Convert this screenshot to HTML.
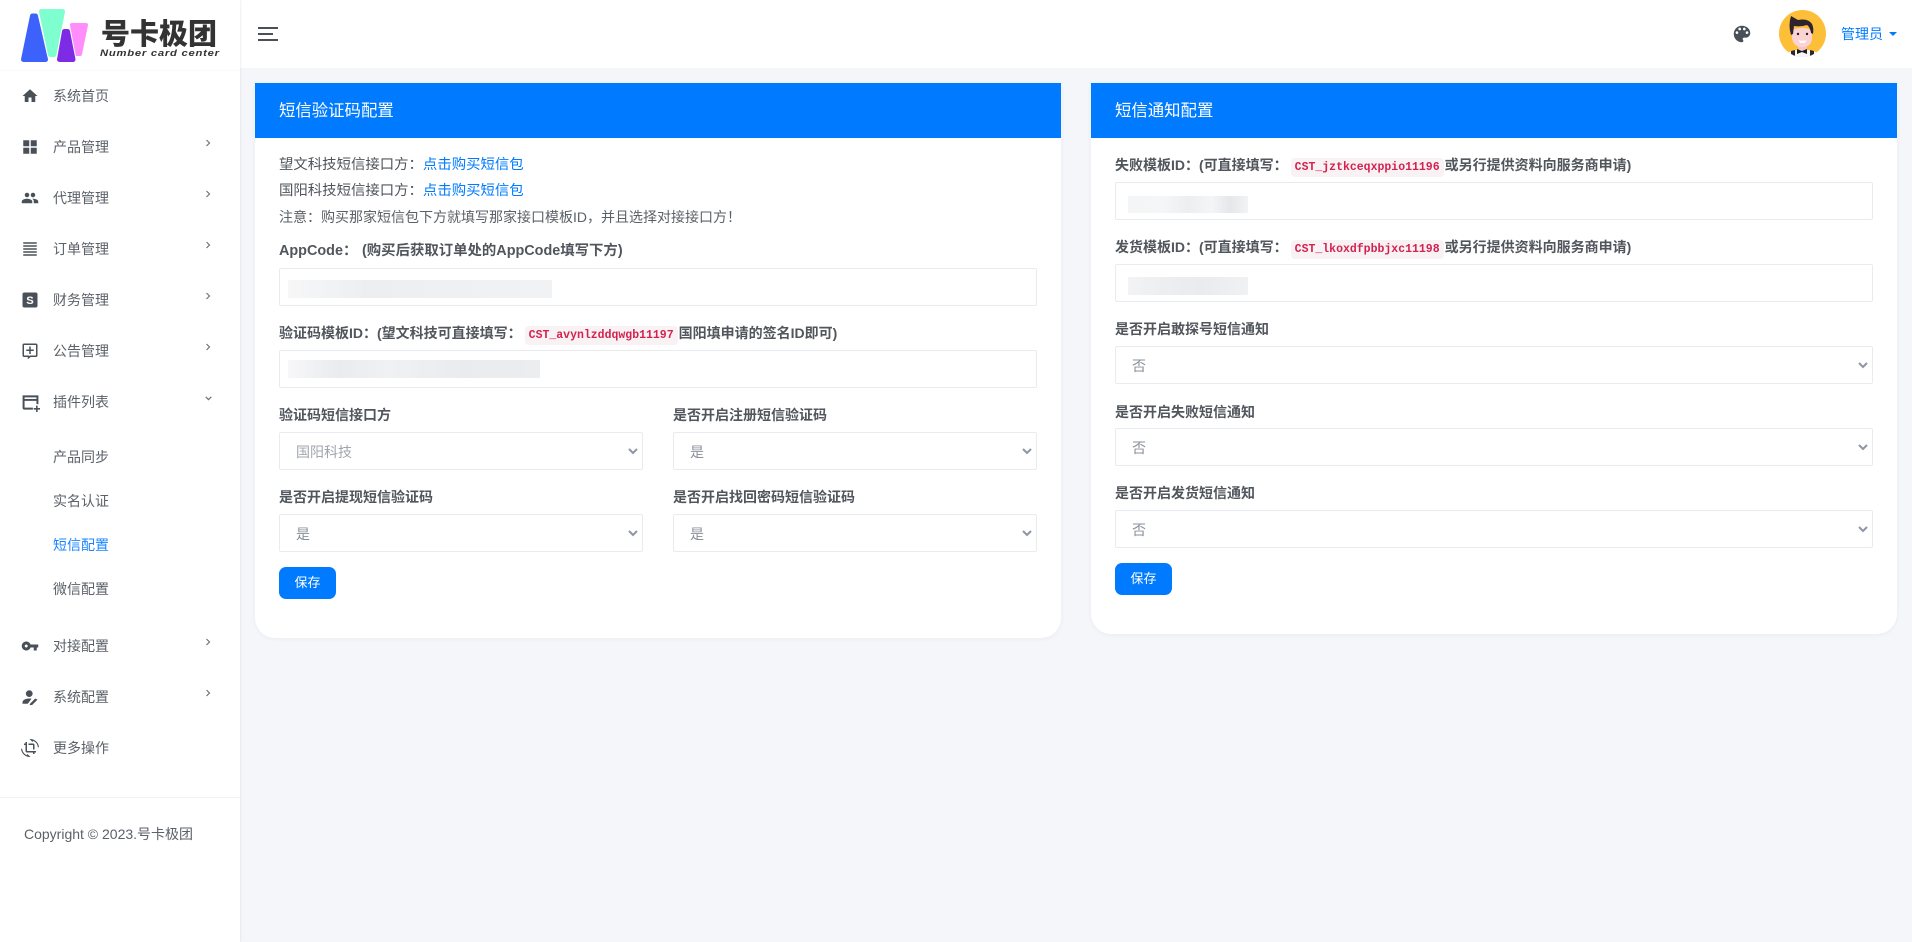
<!DOCTYPE html>
<html lang="zh-CN"><head><meta charset="utf-8"><title>短信配置</title>
<style>
*{box-sizing:border-box}
html,body{margin:0;padding:0}
body{width:1912px;height:942px;overflow:hidden;background:#f4f6fa;position:relative;font-family:"Liberation Sans","Noto Sans CJK SC",sans-serif;color:#495057;font-size:14px}
.abs{position:absolute;white-space:nowrap}
#side{position:absolute;left:0;top:0;width:240px;height:942px;background:#fff;box-shadow:1px 0 2px rgba(60,70,110,.08)}
#top{position:absolute;left:240px;top:0;width:1672px;height:68px;background:#fff}
.it{position:absolute;left:53px;font-size:14px;line-height:20px;color:#5b6168;white-space:nowrap}
.ic{position:absolute;left:21px;width:18px;height:18px;fill:#495057}
.ar{position:absolute;left:205px;width:6px;height:8px;fill:none;stroke:#6c757d;stroke-width:1.2}
.card{position:absolute;width:806px;background:#fff;border-radius:0 0 20px 20px;top:83px;box-shadow:0 1px 4px rgba(60,70,110,.06)}
.ch{position:absolute;left:0;top:0;width:100%;height:55px;background:#007bff;color:#fff;font-size:16.4px;line-height:56px;padding-left:24px}
.lb{position:absolute;font-size:14px;font-weight:700;color:#50565c;line-height:20px;white-space:nowrap}
.tx{position:absolute;font-size:14.4px;line-height:20px;color:#4f555b;white-space:nowrap}
.tx a{color:#007bff;text-decoration:none}
code{font-family:"Liberation Mono",monospace;font-size:11.5px;font-weight:700;color:#d3224f;background:#f9f2f4;border-radius:4px;padding:3px 4px;margin:0 1px 0 3px}
.in{position:absolute;height:38px;border:1px solid #e9ebef;border-radius:2px;background:#fff;overflow:hidden}
.sel{font-size:14px;line-height:38px;padding-left:16px;color:#8a9099}
.sel svg{position:absolute;right:4px;top:14px;width:10px;height:8px;fill:none;stroke:#8e95a3;stroke-width:2}
.btn{position:absolute;height:32px;width:57px;background:#007bff;border-radius:7px;color:#fff;font-size:13px;line-height:32px;text-align:center}
.bl{position:absolute;background:#eef0f2}
</style></head><body>

<div id="top">
<div class="abs" style="left:18px;top:27px;width:20px;height:2px;background:#495057"></div>
<div class="abs" style="left:18px;top:33px;width:15px;height:2px;background:#495057"></div>
<div class="abs" style="left:18px;top:39px;width:20px;height:2px;background:#495057"></div>
<svg class="abs" style="left:1491px;top:23px;width:22px;height:22px;fill:#495057" viewBox="0 0 24 24"><path d="M12 3c-4.97 0-9 4.03-9 9s4.03 9 9 9c.83 0 1.5-.67 1.5-1.5 0-.39-.15-.74-.39-1.01-.23-.26-.38-.61-.38-.99 0-.83.67-1.5 1.5-1.5H16c2.76 0 5-2.24 5-5 0-4.42-4.03-8-9-8zm-5.5 9c-.83 0-1.5-.67-1.5-1.5S5.67 9 6.5 9 8 9.67 8 10.5 7.33 12 6.5 12zm3-4C8.67 8 8 7.33 8 6.5S8.67 5 9.5 5s1.5.67 1.5 1.5S10.33 8 9.5 8zm5 0c-.83 0-1.5-.67-1.5-1.5S13.67 5 14.5 5s1.5.67 1.5 1.5S15.33 8 14.5 8zm3 4c-.83 0-1.5-.67-1.5-1.5S16.67 9 17.5 9s1.5.67 1.5 1.5-.67 1.5-1.5 1.5z"/></svg>
<svg class="abs" style="left:1539px;top:10px;width:47px;height:47px" viewBox="0 0 47 47">
<defs><clipPath id="cp"><circle cx="23.5" cy="23.5" r="23.5"/></clipPath></defs>
<g clip-path="url(#cp)">
<rect width="47" height="47" fill="#fdbf38"/>
<path d="M10 47v-5q13-5 27 0v5z" fill="#f6f6f6"/>
<path d="M12 41l4-1v7h-4zM31 40l4 1v6h-4z" fill="#2a2a2e"/>
<path d="M19 30h9v8l-4 3-5-3z" fill="#f8c3c6"/>
<path d="M13 20q10-4 20 0v9q-1 8-9.500 8T13 29z" fill="#fcd3d5"/>
<path d="M12 6l7 4q10-2 14 4 2 4 1 10l-2-1q-1-6-4-8-6 2-13 1l-1 8-2 1q-3-10 0-19z" fill="#2d2430"/>
<circle cx="19" cy="24" r="1.200" fill="#222"/><circle cx="28" cy="24" r="1.200" fill="#222"/>
<path d="M19.500 30q4 1.500 8 0l-1.500 3h-5z" fill="#fff"/>
<path d="M18 39l5 2 5-2v5l-5-2-5 2z" fill="#1d1d20"/>
</g></svg>
<div class="abs" style="left:1601px;top:24px;font-size:14px;line-height:20px;color:#007bff">管理员</div>
<div class="abs" style="left:1649px;top:32px;width:0;height:0;border-left:4px solid transparent;border-right:4px solid transparent;border-top:4px solid #007bff"></div>
</div>

<div id="side">
<svg class="abs" style="left:18px;top:5px;width:76px;height:60px" viewBox="18 5 76 60" stroke-linejoin="round">
<polygon points="32.500,16 35.500,16 45.500,59.500 23.500,59.500" fill="#3c62fb" stroke="#3c62fb" stroke-width="5"/>
<polygon points="72,25 86,25 80,54 77,54" fill="#ff8dfb" stroke="#ff8dfb" stroke-width="4"/>
<polygon points="41.500,11.500 62.500,11.500 54,54.500 50.500,54.500" fill="#7fffcf" stroke="#fff" stroke-width="7"/>
<polygon points="41.500,11.500 62.500,11.500 54,54.500 50.500,54.500" fill="#7fffcf" stroke="#7fffcf" stroke-width="5"/>
<polygon points="64.500,31.500 67.500,31.500 73,59.500 59.500,59.500" fill="#7e2be6" stroke="#fff" stroke-width="7"/>
<polygon points="64.500,31.500 67.500,31.500 73,59.500 59.500,59.500" fill="#7e2be6" stroke="#7e2be6" stroke-width="5"/>
</svg>
<div class="abs" style="left:101px;top:12px;font-size:29px;line-height:40px;font-weight:900;color:#333;font-family:'Noto Sans CJK SC',sans-serif">号卡极团</div>
<div class="abs" style="left:100px;top:47px;font-size:9px;line-height:12px;font-weight:700;font-style:italic;color:#333;letter-spacing:.6px;transform:scaleX(1.25);transform-origin:left center">Number card center</div>
<div class="abs" style="left:0;top:70px;width:240px;height:1px;background:#f9f9fb"></div>

<svg class="ic" style="top:87px" viewBox="0 0 24 24"><path d="M10 20v-6h4v6h5v-8h3L12 3 2 12h3v8z"/></svg>
<div class="it" style="top:86px">系统首页</div>

<svg class="ic" style="top:138px" viewBox="0 0 24 24"><path d="M3 3h8v8H3zM13 3h8v8h-8zM3 13h8v8H3zM13 13h8v8h-8z"/></svg>
<div class="it" style="top:137px">产品管理</div>
<svg class="ar" style="top:139px" viewBox="0 0 6 8"><path d="M1.500 1l3 3-3 3"/></svg>

<svg class="ic" style="top:189px" viewBox="0 0 24 24"><path d="M16 11c1.660 0 2.990-1.340 2.990-3S17.660 5 16 5c-1.660 0-3 1.340-3 3s1.340 3 3 3zm-8 0c1.660 0 2.990-1.340 2.990-3S9.660 5 8 5C6.340 5 5 6.340 5 8s1.340 3 3 3zm0 2c-2.330 0-7 1.170-7 3.500V19h14v-2.500c0-2.330-4.670-3.500-7-3.500zm8 0c-.29 0-.62.02-.97.05 1.160.84 1.970 1.970 1.970 3.450V19h6v-2.500c0-2.330-4.670-3.500-7-3.500z"/></svg>
<div class="it" style="top:188px">代理管理</div>
<svg class="ar" style="top:190px" viewBox="0 0 6 8"><path d="M1.500 1l3 3-3 3"/></svg>

<svg class="ic" style="top:240px" viewBox="0 0 24 24"><path d="M3 3h18v2H3zM3 7h18v2H3zM3 11h18v2H3zM3 15h18v2H3zM3 19h18v2H3z"/></svg>
<div class="it" style="top:239px">订单管理</div>
<svg class="ar" style="top:241px" viewBox="0 0 6 8"><path d="M1.500 1l3 3-3 3"/></svg>

<svg class="ic" style="top:291px" viewBox="0 0 24 24"><rect x="2" y="2" width="20" height="20" rx="2.500"/><text x="12" y="17.500" text-anchor="middle" font-size="15" font-weight="700" fill="#fff" font-family="Liberation Sans, sans-serif">S</text></svg>
<div class="it" style="top:290px">财务管理</div>
<svg class="ar" style="top:292px" viewBox="0 0 6 8"><path d="M1.500 1l3 3-3 3"/></svg>

<svg class="ic" style="top:342px" viewBox="0 0 24 24"><path d="M20 2H4c-1.100 0-2 .9-2 2v14c0 1.100.9 2 2 2h5v3l4-3h7c1.100 0 2-.9 2-2V4c0-1.100-.9-2-2-2zm0 16h-8l-1 1v-1H4V4h16zM11 6h2v4h4v2h-4v4h-2v-4H7v-2h4z"/></svg>
<div class="it" style="top:341px">公告管理</div>
<svg class="ar" style="top:343px" viewBox="0 0 6 8"><path d="M1.500 1l3 3-3 3"/></svg>

<svg class="ic" style="top:393px;left:21px;width:19px;height:19px" viewBox="0 0 24 24"><path d="M2 3h20v11h-2.500V10h-15v8.500H15V21H4c-1.100 0-2-.9-2-2zM4.500 5.500v2h15v-2zM19 16h2v3h3v2h-3v3h-2v-3h-3v-2h3z"/></svg>
<div class="it" style="top:392px">插件列表</div>
<svg class="abs" style="left:205px;top:396px;width:7px;height:5px;fill:none;stroke:#6c757d;stroke-width:1.200" viewBox="0 0 7 5"><path d="M.7.8l2.800 2.800L6.300.8"/></svg>

<div class="it" style="top:447px">产品同步</div>
<div class="it" style="top:491px">实名认证</div>
<div class="it" style="top:535px;color:#1a85ff">短信配置</div>
<div class="it" style="top:579px">微信配置</div>

<svg class="ic" style="top:637px" viewBox="0 0 24 24"><path d="M12.650 10C11.830 7.670 9.610 6 7 6c-3.310 0-6 2.690-6 6s2.690 6 6 6c2.610 0 4.830-1.670 5.650-4H17v4h4v-4h2v-4H12.650zM7 14c-1.100 0-2-.9-2-2s.9-2 2-2 2 .9 2 2-.9 2-2 2z"/></svg>
<div class="it" style="top:636px">对接配置</div>
<svg class="ar" style="top:638px" viewBox="0 0 6 8"><path d="M1.500 1l3 3-3 3"/></svg>

<svg class="ic" style="top:688px" viewBox="0 0 24 24"><circle cx="11" cy="7.500" r="4.500"/><path d="M2 21v-2c0-3 4.500-5 9-5 1 0 2 .1 3 .3L9 21zM12 21l7-7 3 1.500-7 7-3.500.5z"/></svg>
<div class="it" style="top:687px">系统配置</div>
<svg class="ar" style="top:689px" viewBox="0 0 6 8"><path d="M1.500 1l3 3-3 3"/></svg>

<svg class="ic" style="top:739px;left:21px;width:18px;height:18px" viewBox="0 0 24 24"><path d="M7.470 21.490C4.200 19.930 1.860 16.760 1.500 13H0c.51 6.160 5.660 11 11.950 11 .23 0 .44-.02.66-.03L8.800 20.150l-1.330 1.340zM12.050 0c-.23 0-.44.02-.66.04l3.810 3.810 1.330-1.330C19.800 4.070 22.140 7.240 22.500 11H24c-.51-6.160-5.660-11-11.950-11zM16 14h2V8c0-1.110-.9-2-2-2h-6v2h6v6zm-8 2V4H6v2H4v2h2v8c0 1.100.89 2 2 2h8v2h2v-2h2v-2H8z"/></svg>
<div class="it" style="top:738px">更多操作</div>

<div class="abs" style="left:0;top:797px;width:240px;height:1px;background:#f1f2f5"></div>
<div class="abs" style="left:24px;top:824px;font-size:14px;line-height:20px;color:#5b6168">Copyright © 2023.号卡极团</div>
</div>

<!-- left card -->
<div class="card" style="left:255px;height:555px">
<div class="ch">短信验证码配置</div>
<div class="tx" style="left:24px;top:72px">望文科技短信接口方：<a>点击购买短信包</a></div>
<div class="tx" style="left:24px;top:98px">国阳科技短信接口方：<a>点击购买短信包</a></div>
<div class="tx" style="left:24px;top:124px;font-size:14px;color:#5b6168">注意：购买那家短信包下方就填写那家接口模板ID，并且选择对接接口方！</div>
<div class="lb" style="left:24px;top:158px;font-size:14.4px">AppCode：</div>
<div class="lb" style="left:107px;top:158px;font-size:14.4px">(购买后获取订单处的AppCode填写下方)</div>
<div class="in" style="left:24px;top:185px;width:758px"></div>
<div class="bl" style="left:33px;top:197px;width:264px;height:18px;background:linear-gradient(90deg,#f7f7f8,#eceef0 30%,#eef0f2 60%,#f1f2f4)"></div>
<div class="lb" style="left:24px;top:240px">验证码模板ID：(望文科技可直接填写：<code>CST_avynlzddqwgb11197</code>国阳填申请的签名ID即可)</div>
<div class="in" style="left:24px;top:267px;width:758px"></div>
<div class="bl" style="left:33px;top:277px;width:252px;height:18px;background:linear-gradient(90deg,#f7f7f8,#e9ebee 20%,#f0f1f3 40%,#e9ebee 70%,#ebedef)"></div>
<div class="lb" style="left:24px;top:322px">验证码短信接口方</div>
<div class="in sel" style="left:24px;top:349px;width:364px;color:#a0a5ad">国阳科技<svg viewBox="0 0 10 8"><path d="M1 2l4 4 4-4"/></svg></div>
<div class="lb" style="left:418px;top:322px">是否开启注册短信验证码</div>
<div class="in sel" style="left:418px;top:349px;width:364px">是<svg viewBox="0 0 10 8"><path d="M1 2l4 4 4-4"/></svg></div>
<div class="lb" style="left:24px;top:404px">是否开启提现短信验证码</div>
<div class="in sel" style="left:24px;top:431px;width:364px">是<svg viewBox="0 0 10 8"><path d="M1 2l4 4 4-4"/></svg></div>
<div class="lb" style="left:418px;top:404px">是否开启找回密码短信验证码</div>
<div class="in sel" style="left:418px;top:431px;width:364px">是<svg viewBox="0 0 10 8"><path d="M1 2l4 4 4-4"/></svg></div>
<div class="btn" style="left:24px;top:484px">保存</div>
</div>

<!-- right card -->
<div class="card" style="left:1091px;height:551px">
<div class="ch">短信通知配置</div>
<div class="lb" style="left:24px;top:72px">失败模板ID：(可直接填写：<code>CST_jztkceqxppio11196</code>或另行提供资料向服务商申请)</div>
<div class="in" style="left:24px;top:99px;width:758px"></div>
<div class="bl" style="left:37px;top:113px;width:120px;height:17px;background:linear-gradient(90deg,#f4f5f6,#f5f6f7 30%,#eceef0 50%,#f4f5f6 70%,#e6e7ea 85%,#f2f3f4)"></div>
<div class="lb" style="left:24px;top:154px">发货模板ID：(可直接填写：<code>CST_lkoxdfpbbjxc11198</code>或另行提供资料向服务商申请)</div>
<div class="in" style="left:24px;top:181px;width:758px"></div>
<div class="bl" style="left:37px;top:194px;width:120px;height:18px;background:linear-gradient(90deg,#f2f3f4,#eceef0 30%,#e9ebee 60%,#f0f1f3)"></div>
<div class="lb" style="left:24px;top:236px">是否开启敢探号短信通知</div>
<div class="in sel" style="left:24px;top:263px;width:758px">否<svg viewBox="0 0 10 8"><path d="M1 2l4 4 4-4"/></svg></div>
<div class="lb" style="left:24px;top:319px">是否开启失败短信通知</div>
<div class="in sel" style="left:24px;top:345px;width:758px">否<svg viewBox="0 0 10 8"><path d="M1 2l4 4 4-4"/></svg></div>
<div class="lb" style="left:24px;top:400px">是否开启发货短信通知</div>
<div class="in sel" style="left:24px;top:427px;width:758px">否<svg viewBox="0 0 10 8"><path d="M1 2l4 4 4-4"/></svg></div>
<div class="btn" style="left:24px;top:480px">保存</div>
</div>

</body></html>
